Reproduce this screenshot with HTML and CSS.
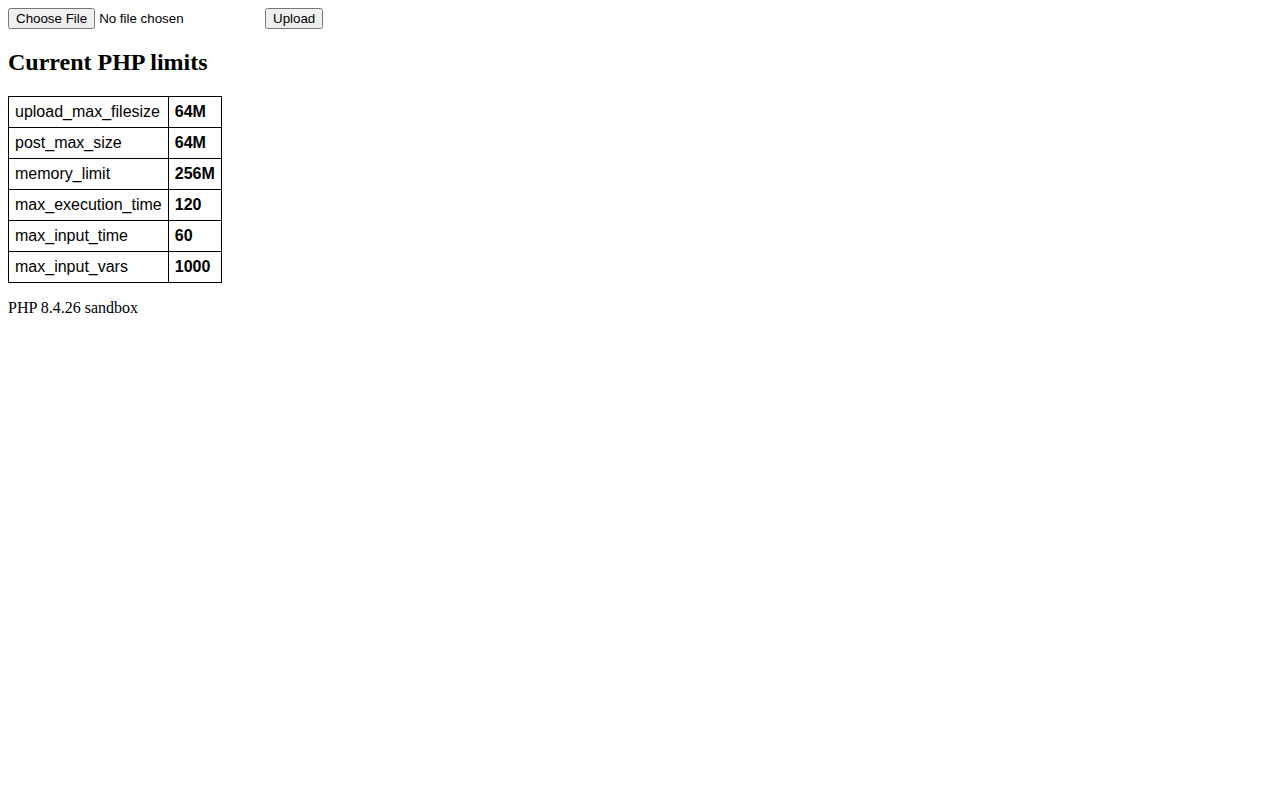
FILE: index.html
```html
<!DOCTYPE html>
<html lang="en">
<head>
  <meta charset="UTF-8">
  <title>PHP limits</title>
  <link rel="stylesheet" href="styles.css">
</head>
<body>

  <form method="post" enctype="multipart/form-data">
    <input type="file" name="file">
    <button type="submit">Upload</button>
  </form>

  <h2>Current PHP limits</h2>

  <table class="limits">
    <tr><td>upload_max_filesize</td><td><b>64M</b></td></tr>
    <tr><td>post_max_size</td><td><b>64M</b></td></tr>
    <tr><td>memory_limit</td><td><b>256M</b></td></tr>
    <tr><td>max_execution_time</td><td><b>120</b></td></tr>
    <tr><td>max_input_time</td><td><b>60</b></td></tr>
    <tr><td>max_input_vars</td><td><b>1000</b></td></tr>
  </table>

  <p>PHP 8.4.26 sandbox</p>

</body>
</html>
```

FILE: styles.css
```css
body {
  font-family: "Liberation Serif", "Times New Roman", serif;
}

input, button {
  font-family: "Liberation Sans", Arial, sans-serif;
}

.limits {
  border-collapse: collapse;
  font-family: "Liberation Sans", Arial, sans-serif;
}

.limits td {
  border: 1px solid #000;
  padding: 6px;
}
```
